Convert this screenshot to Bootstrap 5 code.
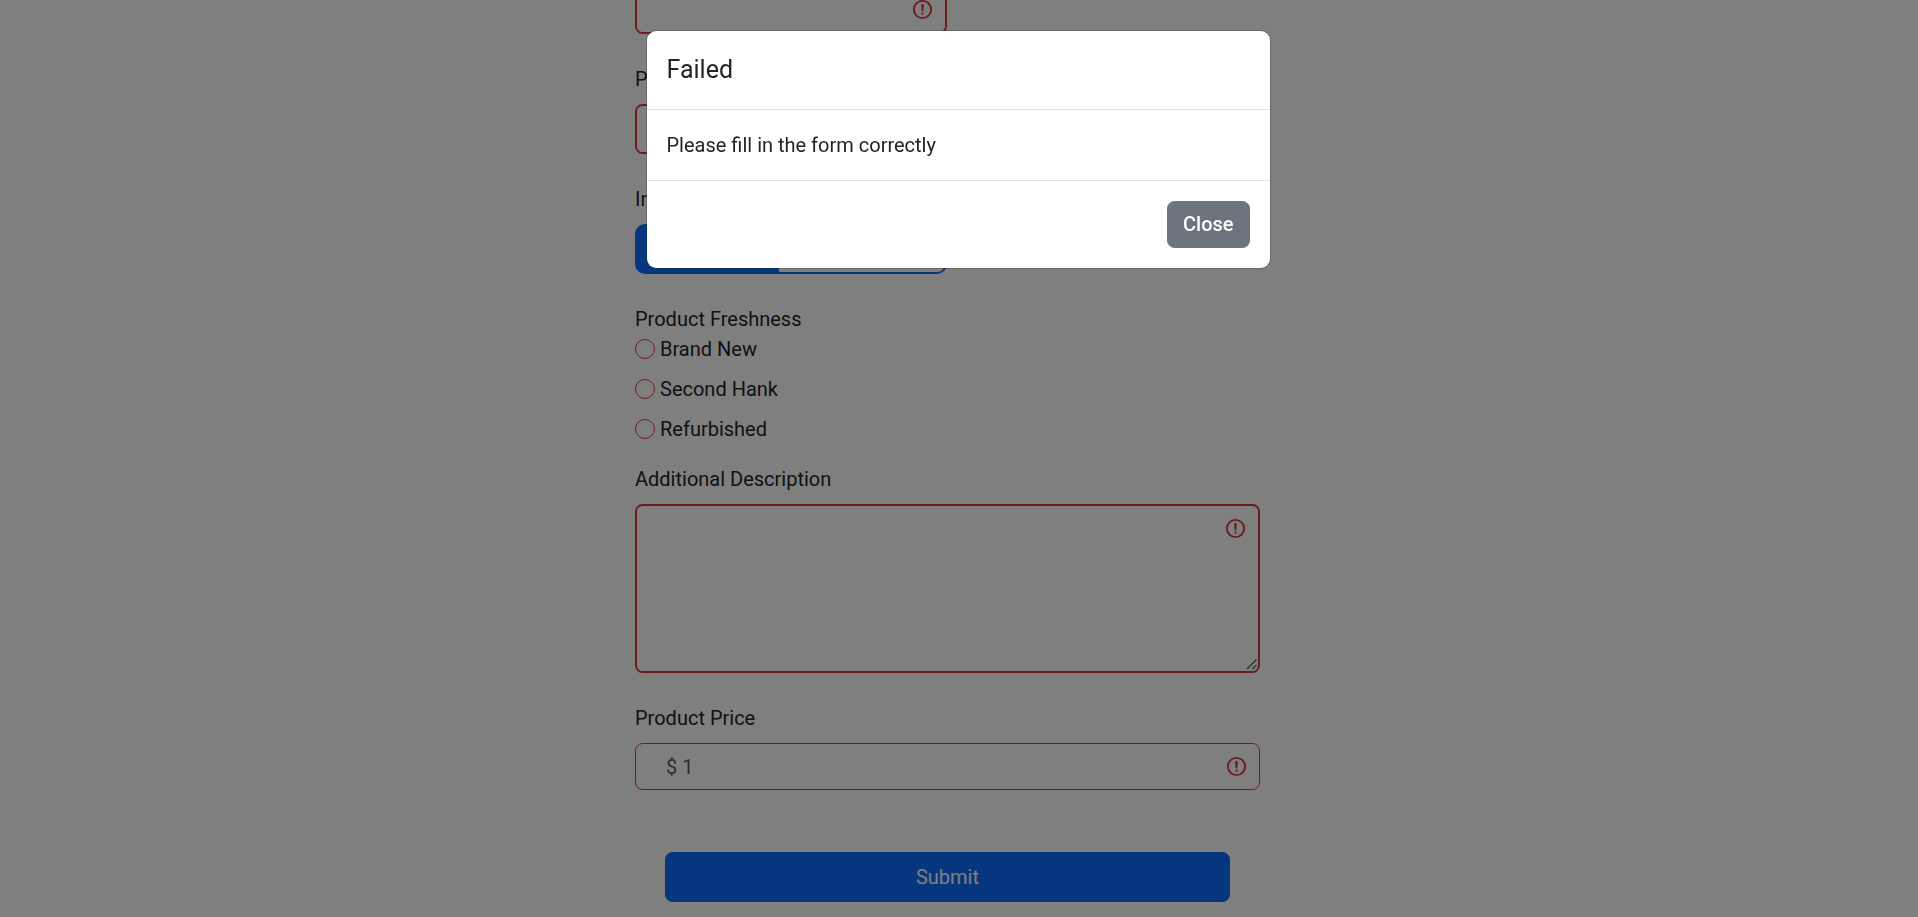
<!DOCTYPE html>
<html lang="en">
<head>
<meta charset="utf-8">
<meta name="viewport" content="width=device-width, initial-scale=1">
<title>Add Product</title>
<link href="https://cdn.jsdelivr.net/npm/bootstrap@5.3.0/dist/css/bootstrap.min.css" rel="stylesheet">
<style>
  html { font-size: 20px; }
  body { font-family: Roboto, "Liberation Sans", sans-serif; }

  /* The form is longer than the window and rests on its last row */
  .form-page { padding: 0 23px 15px 0; }
  .product-form { max-width: 625px; }
  .field { margin-bottom: 30px; }
  .field-label { display: table; margin-bottom: 10px; }
  .thick { border-width: 2px; }
  input.thick, .stock-toggle .btn, .btn-submit { min-height: 50px; }
  .half { width: calc(50% - 1px); }
  .stock-toggle .btn { border-width: 2px; border-radius: 10px; }
  .stock-toggle .btn-narrow { flex: 0 0 46%; }

  .choices { display: grid; gap: 10px; margin-bottom: 20px; }
  .choices .form-check { margin: 0; padding-left: 25px; }
  .choices .form-check-input { margin-left: -25px; }
  .choices .form-check-input.is-invalid ~ .form-check-label { color: inherit; }

  textarea::-webkit-resizer {
    background: url("data:image/svg+xml,%3csvg xmlns='http://www.w3.org/2000/svg' viewBox='0 0 15 15'%3e%3cpath d='M4 13L13.5 3.5M9.5 13l4-4' stroke='%23666' stroke-width='1.5'/%3e%3c/svg%3e") right bottom / 15px 15px no-repeat;
  }

  .price-input { padding-left: 30px; }
  .btn-submit { margin: 62px 30px 0; }

  .modal { padding-right: 2px; }
  .modal-dialog { max-width: 625px; margin: 30px auto; }
  .modal-title { font-weight: 400; }
  .btn-close-text { font-weight: 500; }
</style>
</head>
<body class="modal-open">

<main class="form-page vh-100 overflow-hidden d-flex flex-column justify-content-end align-items-center">
  <form class="product-form w-100 flex-shrink-0" novalidate>
    <div class="field">
      <input type="text" class="form-control thick is-invalid half" aria-label="Product name">
    </div>

    <div class="field">
      <label class="field-label" for="pieces">Pcs</label>
      <input type="text" class="form-control thick is-invalid half" id="pieces">
    </div>

    <div class="field">
      <span class="field-label" id="stock-label">In Stock</span>
      <div class="btn-group stock-toggle half d-flex" role="group" aria-labelledby="stock-label">
        <input type="radio" class="btn-check" name="stock" id="stock-yes" checked>
        <label class="btn btn-outline-primary btn-narrow" for="stock-yes">Yes</label>
        <input type="radio" class="btn-check" name="stock" id="stock-no">
        <label class="btn btn-outline-primary" for="stock-no">No</label>
      </div>
    </div>

    <div id="freshness-label">Product Freshness</div>
    <div class="choices" role="radiogroup" aria-labelledby="freshness-label">
      <div class="form-check">
        <input class="form-check-input is-invalid" type="radio" name="freshness" id="brand-new">
        <label class="form-check-label" for="brand-new">Brand New</label>
      </div>
      <div class="form-check">
        <input class="form-check-input is-invalid" type="radio" name="freshness" id="second-hank">
        <label class="form-check-label" for="second-hank">Second Hank</label>
      </div>
      <div class="form-check">
        <input class="form-check-input is-invalid" type="radio" name="freshness" id="refurbished">
        <label class="form-check-label" for="refurbished">Refurbished</label>
      </div>
    </div>

    <div class="field">
      <label class="field-label" for="description">Additional Description</label>
      <textarea class="form-control thick is-invalid d-block" id="description" rows="5"></textarea>
    </div>

    <div>
      <label class="field-label" for="price">Product Price</label>
      <input type="text" class="form-control price-input is-invalid" id="price" placeholder="$ 1">
    </div>

    <div class="d-grid">
      <button type="submit" class="btn btn-primary btn-submit">Submit</button>
    </div>
  </form>
</main>

<div class="modal-backdrop show"></div>
<div class="modal d-block" tabindex="-1" role="dialog" aria-modal="true" aria-labelledby="modal-title">
  <div class="modal-dialog">
    <div class="modal-content">
      <div class="modal-header">
        <h1 class="modal-title fs-5" id="modal-title">Failed</h1>
      </div>
      <div class="modal-body">Please fill in the form correctly</div>
      <div class="modal-footer">
        <button type="button" class="btn btn-secondary btn-close-text">Close</button>
      </div>
    </div>
  </div>
</div>

<script src="https://cdn.jsdelivr.net/npm/bootstrap@5.3.0/dist/js/bootstrap.bundle.min.js"></script>
</body>
</html>
